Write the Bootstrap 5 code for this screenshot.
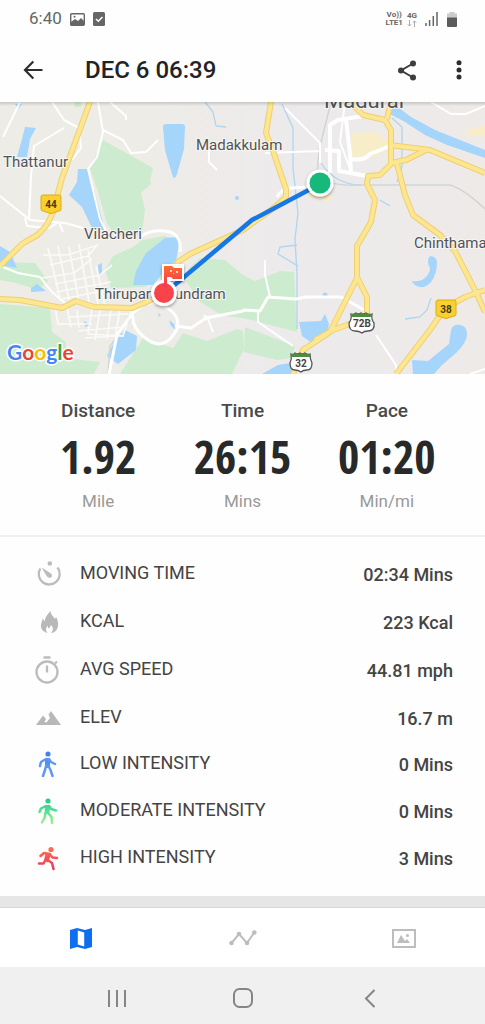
<!DOCTYPE html>
<html lang="en">
<head>
<meta charset="utf-8">
<meta name="viewport" content="width=device-width, initial-scale=1">
<title>Activity details</title>
<link href="https://cdn.jsdelivr.net/npm/bootstrap@5.3.0/dist/css/bootstrap.min.css" rel="stylesheet">
<style>
  body { font-family: Roboto, "Liberation Sans", sans-serif; color: #444; background: #fefefe; }
  svg { display: block; flex: none; }
  .icon-btn { display: inline-block; vertical-align: middle; padding: 0; border: 0; background: none; color: #2d2e30; }
  .status-bar { height: 38px; padding: 0 27px 0 29px; color: #666; font-size: 17px; }
  .net-label { font-size: 8px; line-height: 8px; font-weight: 700; }
  .app-bar { height: 64px; padding: 0 16px 0 22px; }
  .app-title { font-size: 24px; font-weight: 500; line-height: 32px; margin: 0 0 0 40px; color: #222326; }
  .map-view svg { width: 100%; height: auto; }
  .summary { padding: 24px 26px 20px; border-bottom: 2px solid #f0f0f0; }
  .sum-label { font-size: 19px; line-height: 26px; font-weight: 500; color: #4a4a4a; }
  .sum-value { font-family: "Noto Sans ExtraCondensed", "Open Sans Condensed", "Roboto Condensed", "Liberation Sans Narrow", sans-serif; font-size: 46px; line-height: 64px; font-weight: 700; color: #282a2a; }
  .sum-unit { font-size: 17px; line-height: 27px; color: #999; }
  .metrics { padding: 13px 32px 15px 33px; font-size: 18px; line-height: 24px; }
  .metric-icon { width: 47px; }
  .metric-name { font-weight: 400; padding-bottom: 2px; }
  .metric-value { font-weight: 500; padding-top: 2px; }
  .band { height: 12px; background: #e6e6e6; border-bottom: 1px solid #d9d9d9; }
  .tabs-bar { height: 59px; background: #fff; color: #bdbdbd; }
  .system-bar { height: 57px; padding: 4px 52px 0 54px; background: #f0f0f0; }
</style>
</head>
<body>
<div class="d-flex flex-column min-vh-100">
  <div class="status-bar d-flex align-items-center">
    <span>6:40</span>
    <svg class="ms-2" width="15" height="13" viewBox="0 0 15 13"><rect x=".7" y=".7" width="13.6" height="11.6" rx="1" fill="#fff" stroke="#666" stroke-width="1.4"/><path d="M1 12V9l4-3 3 2 3-3 3 3v4z" fill="#666"/><circle cx="4.500" cy="3.800" r="1" fill="#666"/></svg>
    <svg class="ms-2" width="12" height="14" viewBox="0 0 12 14"><rect width="12" height="14" rx="1.500" fill="#666"/><path d="M3 7l2.300 2.300L9.500 5" fill="none" stroke="#fff" stroke-width="1.500"/></svg>
    <div class="ms-auto d-flex align-items-center gap-1">
      <div class="net-label text-center">Vo))<br>LTE1</div>
      <div class="net-label text-center">4G<br><svg width="10" height="7" viewBox="0 0 10 7" class="mx-auto"><path d="M2.500 0v6M.8 4.300L2.500 6l1.700-1.700M7.500 7V1M5.800 2.700L7.500 1l1.700 1.700" fill="none" stroke="#aaa"/></svg></div>
      <svg class="ms-1" width="13" height="14" viewBox="0 0 13 14"><path d="M1 11v3M4.600 8v6M8.300 4v10M12 0v14" stroke="#666" stroke-width="1.500"/></svg>
      <svg class="ms-1" width="12" height="15" viewBox="0 0 12 15"><path d="M3.500 0h5v1.500H11V7H1V1.500h2.500z" fill="#ccc"/><path d="M1 5.500h10V14a1 1 0 0 1-1 1H2a1 1 0 0 1-1-1z" fill="#5c5c5c"/></svg>
    </div>
  </div>

  <header class="app-bar d-flex align-items-center">
    <button class="icon-btn" type="button" aria-label="Back"><svg width="23" height="20" viewBox="0 0 23 20"><path d="M20.500 10H3M11.300 1.600L3 10l8.300 8.400" fill="none" stroke="currentColor" stroke-width="2.200"/></svg></button>
    <h1 class="app-title">DEC 6 06:39</h1>
    <button class="icon-btn ms-auto" type="button" aria-label="Share"><svg width="20" height="21" viewBox="0 0 20 21"><path d="M16 3.500L4 10.500l12 7" fill="none" stroke="#3d3d3d" stroke-width="2"/><g fill="#3d3d3d"><circle cx="16" cy="3.500" r="3"/><circle cx="4" cy="10.500" r="3"/><circle cx="16" cy="17.500" r="3"/></g></svg></button>
    <button class="icon-btn ms-4" type="button" aria-label="More options"><svg class="ms-2" width="20" height="20" viewBox="0 0 20 20"><g fill="currentColor"><circle cx="10" cy="2.700" r="2.500"/><circle cx="10" cy="9.900" r="2.500"/><circle cx="10" cy="17.100" r="2.500"/></g></svg></button>
  </header>

  <div class="map-view">
    <svg viewBox="0 102 485 272" role="img" aria-label="Route map" font-family="Roboto, 'Liberation Sans', sans-serif">
      <defs>
        <linearGradient id="land"><stop offset=".3" stop-color="#eeece7"/><stop offset=".6" stop-color="#edeaec"/><stop offset="1" stop-color="#edeae8"/></linearGradient>
        <linearGradient id="edge" x2="0" y2="1"><stop stop-color="#000" stop-opacity=".16"/><stop offset="1" stop-color="#000" stop-opacity="0"/></linearGradient>
        <linearGradient id="warm" x2="0" y2="1"><stop stop-color="#ff6b32"/><stop offset="1" stop-color="#f43650"/></linearGradient>
        <filter id="drop" x="-50%" y="-50%" width="200%" height="200%"><feDropShadow dx="0" dy="1.500" stdDeviation="1.500" flood-opacity=".4"/></filter>
      </defs>
      <rect y="102" width="485" height="272" fill="url(#land)"/>
      <g fill="#cdeccf">
        <path d="M103 140l50 28-3 12 1 4-10 9 4 16-3 25q-15 6-27 0l-8-10-9-32-8-24z"/>
        <path d="M75 102h6v5h-7zM142 240l22-4 16 4-5 30-30 17-34 1-6-18 8-14 20-9z"/>
        <path d="M0 262l35 1 13 18-10 9-22-7-16-3zM0 304l50 4 2 24 14 10-1 16 35 4-6 12H0z"/>
        <path d="M190 267l10-9 25 2 18 15 12 6 25-10 14 1 3 60-54-14-20-2-23-14-16-24z"/>
        <path d="M245 327l50 19-4 12-14 2-33-8zM143 338l30 10 10-15 24 8 30-12 6 2 1 18-12 25H120z"/>
      </g>
      <g fill="#a5d5fb">
        <path d="M25 127l11 1-6 11-3 18H17l5-18zM78 169h10l5 18 12 43H93L82 207l-13-12 8-13zM163 127q0-3 3-3h16q3 0 3 3l-1 22-7 25q-3 8-5 0l-7-24z"/>
        <path d="M165 238l15-1-4 23-15 15-8 10h-20l3-14 10-18zM0 246l10 6 7 16-17-3zM31 288l6-4 9 7-15 1zM125 330l12 6-1 14-18 14-11-8 8-16zM98 265l4-2v10l-3 3zM169 320l5 4 2 6-5-4zM84 321l7 4-6 2zM15 104h7l-4 5zM158 313l3 2-2 2z"/>
        <path d="M299 322l22-1 4-7 4 10-3 14-11 7-13-9zM262 374l16-9 19-3-6 12zM412 360l16 1 21-17 2-14q2-6 9-5 7 1 7 9 0 8-10 18l-16 14-7 8h-21zM430 256q6 0 7 6 0 12-6 20-5 6-11 5-7-2-8-6 8 1 13-3 5-5 5-10-4-7 0-12zM391 102l20 15 24 13 50 20v8l-38-13-22-10-20-13-15-8-3-8z"/>
        <circle cx="325" cy="295" r="2.500"/><circle cx="237" cy="198" r="2"/>
      </g>
      <g fill="#f8edc9"><path d="M352 133l25-1 15 14-16 11-24 1zM308 188l25 8-4 6-22-6zM468 130l17-5v10h-17z"/></g>
      <g fill="none" stroke="#afd5ef" stroke-width="1.300">
        <path d="M282 104l11 24v40l5 45-3 26 2 35v55M205 102l8 10 3 14 10 1M431 298l-4 12-7 7-15 2M297 245l-17 2-2 7 20 12M392 118l10 9v40l-5 15M321 163q15 22 40 22M380 200l10 6"/>
      </g>
      <path d="M331 102l-12 48-2 25q12 12 45 10h88q14 4 35 24M135 313l-25 33-2 28" fill="none" stroke="#d1d6d4" stroke-width="1.500"/>
      <g fill="none" stroke="#fff" stroke-width="2" stroke-linejoin="round">
        <path d="M98 102l5 30-6 25-9 12 12 50 8 16M103 130l20 10 8 13 15-1 12-12M52 102l12 18 15 8 2 20-9 12M64 128l-30 18-3 30-2 44M0 196l30 24 35 3 18 5M20 102L3 137M110 102l16 14v4M209 150v12l8 8M25 218l2 8 22 2 10-6 4 10"/>
        <path d="M0 266l18 7 22 4 12 15 14 12M285 108l35 35v20M431 102l20 12h15l19-8M345 102l-5 40 12 32M265 153l55-2M376 335l20 30v9M470 374l15-5M265 260v15l5 22M258 310v12l35 24M213 332l-5-13-4-4"/>
        <path d="M243 310l17 1 8-14 28 2 10-2h35l25 14M175 326l16 2 15-10 37-7M140 237q12-9 30-5 12 4 10 20M277 197q4-8 14-9l20-1" stroke-width="3"/>
        <path d="M330 173V125l8-5 25-4M325 150l14 1v20l28 5M346 120l4 33 1 20M350 159q15 2 20-5l20-8" stroke-width="4"/>
        <path d="M133 313q-2 14 11 24 20 17 33-8 4-15-14-23-10-6-20-1zM133 313l-16 22-8 39" stroke-width="3"/>
      </g>
      <g fill="none" stroke="#fafaf9" stroke-width="1.700">
        <path d="M43 255h25l30-10M50 265l38-9 10-12M42 278l32-5 18-14M55 284l45-9 12-10M56 292l55-10M62 299l45-9M48 248l12 50M58 246l11 54M69 247l10 55M79 244l10 58M88 250l10 54M96 266l9 40M55 306l3 18h34M67 307l4 20M77 310l2 18M92 309l-4 25 35 2 8-25M78 331l45-4M85 338l30-2M100 310l-5 30M111 309l-4 30M120 310l-5 27M68 317l60-3"/>
      </g>
      <g fill="none" stroke-linejoin="round">
        <g stroke="#efcf70" stroke-width="6">
          <path d="M90 102L62 178l-9 34q-6 16-17 24-8 4-14 8L0 266M0 299l20 1 42 8 14-7 18 6 38 1 17-7 16-10 13-29 12-8 53-24 32-23 11-10v-8l-13-38-7-18 5-31"/>
          <path d="M350 102l13 13 22 5 6 10v34l-11 11-12 1-1 8 8 16-4 22-14 24v32l-12 24-15 30-27 18-10 24M357 277l10 20v18M355 322l-22 8-18 10M391 102l-4 17M390 145l40 5 55 23M391 163l15-3 20-10M396 160l9 35 8 20 27 20 15 16 20 39 10 22M396 374l34-44 15-22 20-11 20-7"/>
        </g>
        <g stroke="#fce690" stroke-width="4">
          <path d="M90 102L62 178l-9 34q-6 16-17 24-8 4-14 8L0 266M0 299l20 1 42 8 14-7 18 6 38 1 17-7 16-10 13-29 12-8 53-24 32-23 11-10v-8l-13-38-7-18 5-31"/>
          <path d="M350 102l13 13 22 5 6 10v34l-11 11-12 1-1 8 8 16-4 22-14 24v32l-12 24-15 30-27 18-10 24M357 277l10 20v18M355 322l-22 8-18 10M391 102l-4 17M390 145l40 5 55 23M391 163l15-3 20-10M396 160l9 35 8 20 27 20 15 16 20 39 10 22M396 374l34-44 15-22 20-11 20-7"/>
        </g>
      </g>
      <g font-size="15" fill="#505357" stroke="#f7f6f4" stroke-width="2" paint-order="stroke" stroke-linejoin="round">
        <text x="3" y="167">Thattanur</text>
        <text x="196" y="150">Madakkulam</text>
        <text x="84" y="239">Vilacheri</text>
        <text x="414" y="248">Chinthama</text>
        <text x="95" y="299">Thiruparankundram</text>
        <text x="324" y="108" font-size="22">Madurai</text>
      </g>
      <g font-size="10" font-weight="700" text-anchor="middle">
        <path id="shield" d="M43 195h16q2 0 2 2v12q0 2-2 2l-6 2q-2 1-4 0l-6-2q-2 0-2-2v-12q0-2 2-2z" fill="#fbd02d" stroke="#d9ad1c"/>
        <use href="#shield" x="395" y="105"/>
        <text x="51" y="208" fill="#453b19">44</text><text x="446" y="313" fill="#453b19">38</text>
        <g fill="#fff" stroke="#555" stroke-width="1.300">
          <path d="M351 314q3 1 5-1 3 2 5 0 3 2 5 0 3 2 6 1-1 5 2 9 1 8-6 8-4 0-6 2-3-2-7-2-6 0-6-8 3-4 2-9zM291 354q3 1 4-1 3 2 5 0 3 2 5 0 3 2 5 1 0 5 2 9 0 7-5 7-4 0-6 2-3-2-6-2-5 0-5-7 2-4 1-9z"/>
        </g>
        <path d="M351 314q3 1 5-1 3 2 5 0 3 2 5 0 3 2 6 1v3h-21zM291 354q3 1 4-1 3 2 5 0 3 2 5 0 3 2 5 1v3h-19z" fill="#4f8b43"/>
        <text x="362" y="327" fill="#444">72B</text><text x="301" y="367" fill="#444">32</text>
      </g>
      <text x="7" y="360" font-family="Lato, Roboto, sans-serif" font-size="21" font-weight="700" stroke="#fff" stroke-width="3" paint-order="stroke" stroke-linejoin="round"><tspan fill="#4285f4">G</tspan><tspan fill="#ea4335">o</tspan><tspan fill="#fbbc05">o</tspan><tspan fill="#4285f4">g</tspan><tspan fill="#34a853">l</tspan><tspan fill="#ea4335">e</tspan></text>
      <path d="M320 184l-68 36-87 73" fill="none" stroke="#1677e5" stroke-width="4.500"/>
      <g filter="url(#drop)"><circle cx="320" cy="183" r="13.500" fill="#fff"/><circle cx="164" cy="293" r="13" fill="#fff"/><path d="M162 264h22v17h-16v10h-6z" fill="#fff"/></g>
      <circle cx="320" cy="183" r="10.500" fill="#16b97a"/>
      <circle cx="164" cy="293" r="10" fill="#f8434b"/>
      <path d="M164 266h8l2 2h8v11h-9l-2-2h-4v10h-3z" fill="url(#warm)"/>
      <path d="M170 270h2v2h-2zM173 273h1v1h-1zM176 271h2v2h-2z" fill="#ffd5bd"/>
      <rect y="102" width="485" height="4" fill="url(#edge)"/>
    </svg>
  </div>

  <section class="summary">
    <div class="row g-0 text-center">
      <div class="col"><div class="sum-label">Distance</div><div class="sum-value">1.92</div><div class="sum-unit">Mile</div></div>
      <div class="col"><div class="sum-label">Time</div><div class="sum-value">26:15</div><div class="sum-unit">Mins</div></div>
      <div class="col"><div class="sum-label">Pace</div><div class="sum-value">01:20</div><div class="sum-unit">Min/mi</div></div>
    </div>
  </section>

  <ul class="metrics list-unstyled mb-0 flex-grow-1 d-flex flex-column">
    <li class="d-flex align-items-center flex-fill">
      <div class="metric-icon"><svg width="30" height="28" viewBox="0 0 30 28"><path d="M7.300 8.500A10.500 10.500 0 1 0 24.500 7.500" fill="none" stroke="#bcbcbc" stroke-width="2.300"/><path d="M8.500 7.500l9.500 6q2 2.500 0 4-2 1-4-1z" fill="#bcbcbc"/><circle cx="16.800" cy="3.500" r="2.300" fill="#bcbcbc"/></svg></div>
      <span class="metric-name">MOVING TIME</span><span class="metric-value ms-auto">02:34 Mins</span>
    </li>
    <li class="d-flex align-items-center flex-fill">
      <div class="metric-icon"><svg width="30" height="24" viewBox="0 0 30 24"><path d="M17.500 1c.5 4 2.500 5 4.500 8l1-2c2.500 4 3 9 .5 13-1.500 2-3.500 3-5.500 3 3-3 2-6 0-8-.5 2-1.500 2.500-2.500 3.500-.8-1-.8-2-.5-3-3 3-2 5.500-.5 7.500C8.500 21.500 7 17 8.500 12.500c.5-1.500 1-2.500 1.300-4l2 3C12 7 14.500 4.500 17.500 1z" fill="#b8b8b8"/></svg></div>
      <span class="metric-name">KCAL</span><span class="metric-value ms-auto">223 Kcal</span>
    </li>
    <li class="d-flex align-items-center flex-fill">
      <div class="metric-icon"><svg width="28" height="28" viewBox="0 0 28 28"><g fill="none" stroke="#bcbcbc" stroke-width="2.300"><circle cx="14" cy="16" r="10.500"/><path d="M10.500 1.500h7M14 9.500v7M22 7.500l2-2"/></g></svg></div>
      <span class="metric-name">AVG SPEED</span><span class="metric-value ms-auto">44.81 mph</span>
    </li>
    <li class="d-flex align-items-center flex-fill">
      <div class="metric-icon"><svg width="30" height="16" viewBox="0 0 30 16"><path d="M3 15l7-9.500 3 3.500-1.500 3 2 .5L17 8l-1.500-3.500L18 1l10 14z" fill="#b8b8b8"/></svg></div>
      <span class="metric-name">ELEV</span><span class="metric-value ms-auto">16.7 m</span>
    </li>
    <li class="d-flex align-items-center flex-fill">
      <div class="metric-icon"><svg width="28" height="26" viewBox="0 0 28 26"><circle cx="15" cy="3" r="2.600" fill="#4a83e6"/><path d="M12 7h5v10h-5z" fill="#568eec"/><path d="M13 8l-5 3-1 4M16 8l2 3 4 2M13 15l-1 4-2 6M15.500 15l2 4 2 6" fill="none" stroke="#5f98f4" stroke-width="2.500" stroke-linecap="round" stroke-linejoin="round"/></svg></div>
      <span class="metric-name">LOW INTENSITY</span><span class="metric-value ms-auto">0 Mins</span>
    </li>
    <li class="d-flex align-items-center flex-fill">
      <div class="metric-icon"><svg width="28" height="26" viewBox="0 0 28 26"><defs><linearGradient id="fresh" gradientUnits="userSpaceOnUse" x1="0" y1="0" x2="0" y2="26"><stop stop-color="#2ec48d"/><stop offset=".45" stop-color="#4fdc96"/><stop offset="1" stop-color="#a7f28b"/></linearGradient></defs><circle cx="15" cy="3" r="2.600" fill="url(#fresh)"/><path d="M12 7h5l-.5 9h-5z" fill="url(#fresh)"/><path d="M13 8L8 10.500 6.500 14M16 8l2 3 5 1.500M12.500 15l-1 5-2.500 4.500M15 15l3.500 4 .5 6" fill="none" stroke="url(#fresh)" stroke-width="2.500" stroke-linecap="round" stroke-linejoin="round"/></svg></div>
      <span class="metric-name">MODERATE INTENSITY</span><span class="metric-value ms-auto">0 Mins</span>
    </li>
    <li class="d-flex align-items-center flex-fill">
      <div class="metric-icon"><svg width="28" height="26" viewBox="0 0 28 26"><defs><linearGradient id="blaze" gradientUnits="userSpaceOnUse" x1="0" y1="0" x2="0" y2="26"><stop stop-color="#ff7a45"/><stop offset="1" stop-color="#ee2f60"/></linearGradient></defs><circle cx="18" cy="4.500" r="2.600" fill="url(#blaze)"/><path d="M12.500 8.500l5.500 1-3 8-4-2z" fill="url(#blaze)"/><path d="M17 9l-6-1-3.500 3M17 9.500l2.500 3 4.500.5M13 14l-2.500 4.500H6M14 14.500l5 3.500 1.500 6" fill="none" stroke="url(#blaze)" stroke-width="2.500" stroke-linecap="round" stroke-linejoin="round"/></svg></div>
      <span class="metric-name">HIGH INTENSITY</span><span class="metric-value ms-auto">3 Mins</span>
    </li>
  </ul>

  <div class="band"></div>
  <nav class="tabs-bar row g-0 align-items-center text-center" aria-label="Views">
    <div class="col"><button class="icon-btn" type="button" aria-label="Map"><svg width="24" height="23" viewBox="0 0 24 23"><path d="M1 3l7-2 8 2 7-2v19l-7 2-8-2-7 2z" fill="#0d6ff0"/><path d="M8.800 3.500l6.400 2v14l-6.400-2z" fill="#fff"/></svg></button></div>
    <div class="col"><button class="icon-btn" type="button" aria-label="Charts"><svg width="28" height="16" viewBox="0 0 28 16"><g fill="#bdbdbd"><circle cx="2.500" cy="13" r="2.300"/><circle cx="10" cy="4" r="2.300"/><circle cx="18" cy="13" r="2.300"/><circle cx="25.300" cy="2.500" r="2.300"/></g><path d="M2.500 13L10 4l8 9 7.300-10.500" fill="none" stroke="#bdbdbd" stroke-width="2"/></svg></button></div>
    <div class="col"><button class="icon-btn" type="button" aria-label="Photos"><svg width="24" height="19" viewBox="0 0 24 19"><rect x="1" y="1" width="22" height="17" fill="none" stroke="#bdbdbd" stroke-width="2"/><path d="M5 14l4-8 4 6 2-2 3 4z" fill="#bdbdbd"/><circle cx="15.500" cy="6.500" r="1.500" fill="#bdbdbd"/></svg></button></div>
  </nav>
  <nav class="system-bar row g-0 align-items-center text-center" aria-label="System navigation">
    <div class="col"><button class="icon-btn" type="button" aria-label="Recent apps"><svg width="20" height="19" viewBox="0 0 20 19"><path d="M2 1v17M10 1v17M18 1v17" stroke="#858585" stroke-width="2"/></svg></button></div>
    <div class="col"><button class="icon-btn" type="button" aria-label="Home"><svg width="20" height="20" viewBox="0 0 20 20"><rect x="1" y="1" width="18" height="18" rx="5.500" fill="none" stroke="#858585" stroke-width="2"/></svg></button></div>
    <div class="col"><button class="icon-btn" type="button" aria-label="Back"><svg width="12" height="19" viewBox="0 0 12 19"><path d="M10.500 1L2 9.500l8.500 8.500" fill="none" stroke="#858585" stroke-width="2"/></svg></button></div>
  </nav>
</div>
<script src="https://cdn.jsdelivr.net/npm/bootstrap@5.3.0/dist/js/bootstrap.bundle.min.js"></script>
</body>
</html>
